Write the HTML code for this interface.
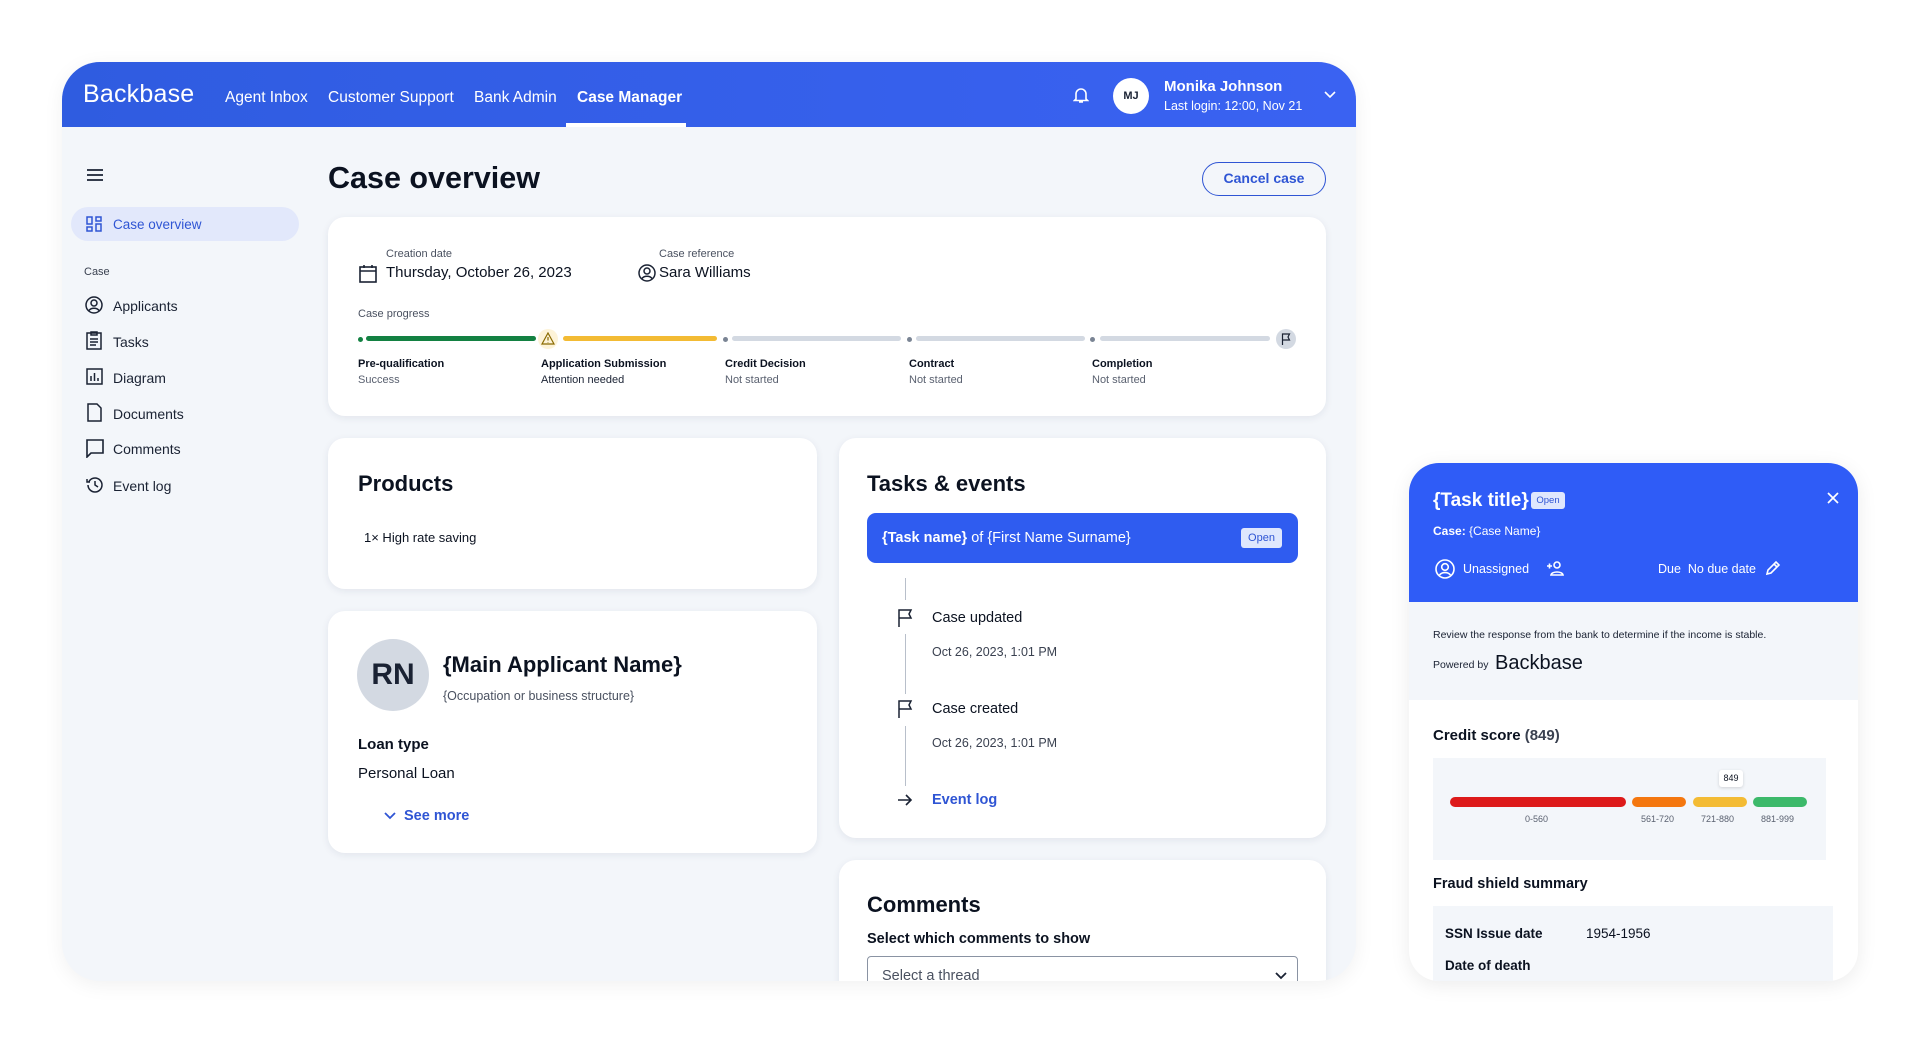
<!DOCTYPE html>
<html><head><meta charset="utf-8"><style>
*{box-sizing:border-box;margin:0;padding:0}
body{width:1920px;height:1045px;background:#fff;font-family:"Liberation Sans",sans-serif;color:#0b1220;position:relative;overflow:hidden}
.abs{position:absolute}
.main{left:62px;top:62px;width:1294px;height:919px;background:#f3f6fa;border-radius:38px 38px 38px 38px;overflow:hidden;box-shadow:0 4px 20px rgba(0,0,0,.06)}
.hdr{left:0;top:0;width:1294px;height:65px;background:linear-gradient(90deg,#2f5ce0,#3a62f2)}
.hdr .t{color:#fff;font-size:15.5px;top:27px}
.card{background:#fff;border-radius:17px;box-shadow:0 2px 8px rgba(20,40,80,.08)}
.nav{font-size:14px;color:#1a2233}
.lbl{font-size:11px;color:#4a5160}
.h2{font-size:22px;font-weight:bold}
.pl{font-size:11px;font-weight:bold}
.ps{font-size:11px;color:#5a6170}
svg{position:absolute}
</style></head><body>
<div class="abs main">
 <div class="abs hdr">
  <div class="abs" style="left:21px;top:18px;color:#fff;font-size:25px;letter-spacing:.2px">Backbase</div>
  <div class="abs t" style="left:163px">Agent Inbox</div>
  <div class="abs t" style="left:266px">Customer Support</div>
  <div class="abs t" style="left:412px">Bank Admin</div>
  <div class="abs t" style="left:515px;font-weight:bold">Case Manager</div>
  <div class="abs" style="left:504px;top:61px;width:120px;height:4px;background:#fff"></div>
  <svg style="left:1011px;top:24px" width="16" height="18" viewBox="0 0 16 18"><path d="M3 13V8a5 5 0 0110 0v5l1.5 1.5h-13z M6 16h4" fill="none" stroke="#fff" stroke-width="1.6"/></svg>
  <div class="abs" style="left:1051px;top:16px;width:36px;height:36px;border-radius:50%;background:#fff;color:#1a2233;font-size:11px;font-weight:bold;text-align:center;line-height:36px">MJ</div>
  <div class="abs" style="left:1102px;top:16px;color:#fff;font-size:15px;font-weight:bold">Monika Johnson</div>
  <div class="abs" style="left:1102px;top:37px;color:#fff;font-size:12.5px">Last login: 12:00, Nov 21</div>
  <svg style="left:1262px;top:29px" width="12" height="8" viewBox="0 0 12 8"><path d="M1 1l5 5 5-5" fill="none" stroke="#fff" stroke-width="1.6"/></svg>
 </div>
 <!-- sidebar -->
 <svg style="left:24px;top:106px" width="18" height="14"><path d="M1 2h16M1 7h16M1 12h16" stroke="#1a2233" stroke-width="1.8"/></svg>
 <div class="abs" style="left:9px;top:145px;width:228px;height:34px;border-radius:17px;background:#e2e8fb"></div>
 <svg style="left:24px;top:154px" width="16" height="16" viewBox="0 0 16 16" fill="none" stroke="#2f55d4" stroke-width="1.5"><rect x="1" y="1" width="5" height="7"/><rect x="10" y="1" width="5" height="4"/><rect x="1" y="11" width="5" height="4"/><rect x="10" y="8" width="5" height="7"/></svg>
 <div class="abs nav" style="left:51px;top:155px;color:#2f55d4;font-size:13.5px">Case overview</div>
 <div class="abs" style="left:22px;top:204px;font-size:11px;color:#3a4150">Case</div>
 <svg style="left:23px;top:234px" width="18" height="18" viewBox="0 0 18 18" fill="none" stroke="#1a2233" stroke-width="1.5"><circle cx="9" cy="9" r="8"/><circle cx="9" cy="7" r="3"/><path d="M4 14.5c2-3 8-3 10 0"/></svg>
 <div class="abs nav" style="left:51px;top:236px">Applicants</div>
 <svg style="left:24px;top:269px" width="16" height="19" viewBox="0 0 16 19" fill="none" stroke="#1a2233" stroke-width="1.5"><rect x="1" y="2" width="14" height="16"/><path d="M5 1h6v3H5z M4 8h8M4 11h8M4 14h6"/></svg>
 <div class="abs nav" style="left:51px;top:272px">Tasks</div>
 <svg style="left:24px;top:306px" width="17" height="17" viewBox="0 0 17 17" fill="none" stroke="#1a2233" stroke-width="1.5"><rect x="1" y="1" width="15" height="15"/><path d="M5 13V8M8.5 13V5M12 13v-3"/></svg>
 <div class="abs nav" style="left:51px;top:308px">Diagram</div>
 <svg style="left:25px;top:341px" width="15" height="19" viewBox="0 0 15 19" fill="none" stroke="#1a2233" stroke-width="1.5"><path d="M1 1h9l4 4v13H1z"/></svg>
 <div class="abs nav" style="left:51px;top:344px">Documents</div>
 <svg style="left:24px;top:377px" width="18" height="19" viewBox="0 0 18 19" fill="none" stroke="#1a2233" stroke-width="1.6"><path d="M1 1h16v13H5l-4 4z"/></svg>
 <div class="abs nav" style="left:51px;top:379px">Comments</div>
 <svg style="left:23px;top:414px" width="19" height="18" viewBox="0 0 19 18" fill="none" stroke="#1a2233" stroke-width="1.5"><path d="M3 9a7 7 0 107-7 7 7 0 00-6 3.5M2 3v3h3M10 5v4l3 2"/></svg>
 <div class="abs nav" style="left:51px;top:416px">Event log</div>
 <!-- title -->
 <div class="abs" style="left:266px;top:99px;font-size:30.5px;font-weight:bold">Case overview</div>
 <div class="abs" style="left:1140px;top:100px;width:124px;height:34px;border:1.5px solid #2f55d4;border-radius:17px;color:#2f55d4;font-size:14px;font-weight:bold;text-align:center;line-height:31px">Cancel case</div>
 <!-- card1 -->
 <div class="abs card" style="left:266px;top:155px;width:998px;height:199px">
  <div class="abs lbl" style="left:58px;top:31px">Creation date</div>
  <svg style="left:31px;top:47px" width="18" height="19" viewBox="0 0 18 19" fill="none" stroke="#1a2233" stroke-width="1.6"><rect x="1" y="3" width="16" height="15"/><path d="M1 7h16M5 1v3M13 1v3"/></svg>
  <div class="abs" style="left:58px;top:47px;font-size:15px">Thursday, October 26, 2023</div>
  <div class="abs lbl" style="left:331px;top:31px">Case reference</div>
  <svg style="left:310px;top:47px" width="18" height="18" viewBox="0 0 18 18" fill="none" stroke="#1a2233" stroke-width="1.5"><circle cx="9" cy="9" r="8"/><circle cx="9" cy="7" r="3"/><path d="M4 14.5c2-3 8-3 10 0"/></svg>
  <div class="abs" style="left:331px;top:47px;font-size:15px">Sara Williams</div>
  <div class="abs lbl" style="left:30px;top:91px">Case progress</div>
  <div class="abs" style="left:30px;top:120px;width:5px;height:5px;border-radius:50%;background:#138142"></div>
  <div class="abs" style="left:38px;top:119px;width:170px;height:5px;border-radius:3px;background:#138142"></div>
  <div class="abs" style="left:210px;top:112px;width:20px;height:20px;border-radius:50%;background:#fdf3d8"></div>
  <svg style="left:213px;top:115px" width="14" height="13" viewBox="0 0 14 13"><path d="M7 1l6 11H1z M7 5v3.5M7 10v.5" fill="none" stroke="#8a6a00" stroke-width="1.2"/></svg>
  <div class="abs" style="left:235px;top:119px;width:154px;height:5px;border-radius:3px;background:#f3bb34"></div>
  <div class="abs" style="left:395px;top:120px;width:5px;height:5px;border-radius:50%;background:#7a8494"></div>
  <div class="abs" style="left:404px;top:119px;width:169px;height:5px;border-radius:3px;background:#d3d9e2"></div>
  <div class="abs" style="left:579px;top:120px;width:5px;height:5px;border-radius:50%;background:#7a8494"></div>
  <div class="abs" style="left:588px;top:119px;width:169px;height:5px;border-radius:3px;background:#d3d9e2"></div>
  <div class="abs" style="left:762px;top:120px;width:5px;height:5px;border-radius:50%;background:#7a8494"></div>
  <div class="abs" style="left:772px;top:119px;width:170px;height:5px;border-radius:3px;background:#d3d9e2"></div>
  <div class="abs" style="left:948px;top:112px;width:20px;height:20px;border-radius:50%;background:#d3d9e2"></div>
  <svg style="left:953px;top:116px" width="10" height="12" viewBox="0 0 10 12"><path d="M1.5 12V1h7l-1.5 3 1.5 3h-7" fill="none" stroke="#1a2233" stroke-width="1.2"/></svg>
  <div class="abs pl" style="left:30px;top:141px">Pre-qualification</div><div class="abs ps" style="left:30px;top:157px">Success</div>
  <div class="abs pl" style="left:213px;top:141px">Application Submission</div><div class="abs ps" style="left:213px;top:157px;color:#1a2233">Attention needed</div>
  <div class="abs pl" style="left:397px;top:141px">Credit Decision</div><div class="abs ps" style="left:397px;top:157px">Not started</div>
  <div class="abs pl" style="left:581px;top:141px">Contract</div><div class="abs ps" style="left:581px;top:157px">Not started</div>
  <div class="abs pl" style="left:764px;top:141px">Completion</div><div class="abs ps" style="left:764px;top:157px">Not started</div>
 </div>
 <!-- products -->
 <div class="abs card" style="left:266px;top:376px;width:489px;height:151px">
  <div class="abs h2" style="left:30px;top:33px">Products</div>
  <div class="abs" style="left:36px;top:92px;font-size:13px">1× High rate saving</div>
 </div>
 <!-- applicant -->
 <div class="abs card" style="left:266px;top:549px;width:489px;height:242px">
  <div class="abs" style="left:29px;top:28px;width:72px;height:72px;border-radius:50%;background:#d3d9e2;font-size:30px;font-weight:bold;text-align:center;line-height:72px;color:#1a2233">RN</div>
  <div class="abs" style="left:115px;top:41px;font-size:22px;font-weight:bold">{Main Applicant Name}</div>
  <div class="abs" style="left:115px;top:78px;font-size:12.5px;color:#4a5160">{Occupation or business structure}</div>
  <div class="abs" style="left:30px;top:125px;font-size:15px;font-weight:bold">Loan type</div>
  <div class="abs" style="left:30px;top:154px;font-size:15px">Personal Loan</div>
  <svg style="left:56px;top:201px" width="12" height="8" viewBox="0 0 12 8"><path d="M1 1l5 5 5-5" fill="none" stroke="#2f55d4" stroke-width="1.8"/></svg>
  <div class="abs" style="left:76px;top:197px;font-size:14.5px;font-weight:bold;color:#2f55d4">See more</div>
 </div>
 <!-- tasks -->
 <div class="abs card" style="left:777px;top:376px;width:487px;height:400px">
  <div class="abs h2" style="left:28px;top:33px">Tasks &amp; events</div>
  <div class="abs" style="left:28px;top:75px;width:431px;height:50px;border-radius:9px;background:#2f5cf0;color:#fff;font-size:14.5px;line-height:51px;padding-left:15px"><b>{Task name}</b> of {First Name Surname}</div>
  <div class="abs" style="left:402px;top:90px;width:41px;height:20px;border-radius:3px;background:#dfe7fd;color:#2f55d4;font-size:11px;text-align:center;line-height:20px">Open</div>
  <div class="abs" style="left:66px;top:140px;width:1px;height:22px;background:#b8bfca"></div>
  <svg style="left:58px;top:171px" width="16" height="18" viewBox="0 0 16 18"><path d="M2 18V1h12l-2 4 2 4H2" fill="none" stroke="#1a2233" stroke-width="1.5"/></svg>
  <div class="abs" style="left:93px;top:172px;font-size:14.5px">Case updated</div>
  <div class="abs" style="left:66px;top:196px;width:1px;height:60px;background:#b8bfca"></div>
  <div class="abs" style="left:93px;top:207px;font-size:12.5px;color:#3a4150">Oct 26, 2023, 1:01 PM</div>
  <svg style="left:58px;top:262px" width="16" height="18" viewBox="0 0 16 18"><path d="M2 18V1h12l-2 4 2 4H2" fill="none" stroke="#1a2233" stroke-width="1.5"/></svg>
  <div class="abs" style="left:93px;top:263px;font-size:14.5px">Case created</div>
  <div class="abs" style="left:66px;top:288px;width:1px;height:60px;background:#b8bfca"></div>
  <div class="abs" style="left:93px;top:298px;font-size:12.5px;color:#3a4150">Oct 26, 2023, 1:01 PM</div>
  <svg style="left:58px;top:354px" width="16" height="16" viewBox="0 0 16 16"><path d="M1 8h13M9 3l5 5-5 5" fill="none" stroke="#1a2233" stroke-width="1.6"/></svg>
  <div class="abs" style="left:93px;top:354px;font-size:14.5px;font-weight:bold;color:#2f55d4">Event log</div>
 </div>
 <!-- comments -->
 <div class="abs card" style="left:777px;top:798px;width:487px;height:160px">
  <div class="abs h2" style="left:28px;top:32px">Comments</div>
  <div class="abs" style="left:28px;top:71px;font-size:14.5px;font-weight:bold">Select which comments to show</div>
  <div class="abs" style="left:28px;top:96px;width:431px;height:36px;border:1px solid #8a93a3;border-radius:4px;font-size:14.5px;color:#4a5160;padding:11px 14px">Select a thread</div>
  <svg style="left:436px;top:112px" width="12" height="8" viewBox="0 0 12 8"><path d="M1 1l5 5 5-5" fill="none" stroke="#1a2233" stroke-width="1.8"/></svg>
 </div>
</div>
<!-- right panel -->
<div class="abs" style="left:1409px;top:463px;width:449px;height:518px;border-radius:30px 30px 30px 30px;overflow:hidden;background:#fff;box-shadow:0 4px 20px rgba(0,0,0,.08)">
 <div class="abs" style="left:0;top:0;width:449px;height:139px;background:#2f5cf7"></div>
 <div class="abs" style="left:24px;top:27px;color:#fff;font-size:19px;font-weight:bold">{Task title}</div>
 <div class="abs" style="left:122px;top:29px;width:34px;height:17px;border-radius:3px;background:#dfe7fd;color:#2f55d4;font-size:9.5px;text-align:center;line-height:17px">Open</div>
 <svg style="left:418px;top:29px" width="12" height="12"><path d="M1 1l10 10M11 1L1 11" stroke="#fff" stroke-width="1.7"/></svg>
 <div class="abs" style="left:24px;top:61px;color:#fff;font-size:12px"><b>Case:</b> {Case Name}</div>
 <svg style="left:26px;top:96px" width="20" height="20" viewBox="0 0 20 20" fill="none" stroke="#fff" stroke-width="1.6"><circle cx="10" cy="10" r="9"/><circle cx="10" cy="8" r="3.3"/><path d="M4.5 16c2.5-3.3 8.5-3.3 11 0"/></svg>
 <div class="abs" style="left:54px;top:99px;color:#fff;font-size:12.5px">Unassigned</div>
 <svg style="left:137px;top:98px" width="18" height="15" viewBox="0 0 18 15" fill="none" stroke="#fff" stroke-width="1.6"><circle cx="11" cy="4" r="3"/><path d="M5 14c1-4 11-4 12 0z M1 5h5M3.5 2.5v5"/></svg>
 <div class="abs" style="left:249px;top:99px;color:#fff;font-size:12.5px">Due&nbsp; No due date</div>
 <svg style="left:356px;top:97px" width="16" height="16" viewBox="0 0 16 16" fill="none" stroke="#fff" stroke-width="1.6"><path d="M2 14l1-4 8-8 3 3-8 8z M9 4l3 3"/></svg>
 <div class="abs" style="left:0;top:139px;width:449px;height:98px;background:#f3f6fa"></div>
 <div class="abs" style="left:24px;top:166px;font-size:10.5px;color:#1a2233">Review the response from the bank to determine if the income is stable.</div>
 <div class="abs" style="left:24px;top:196px;font-size:10.5px;color:#1a2233">Powered by</div>
 <div class="abs" style="left:86px;top:189px;font-size:20px;color:#0b1220">Backbase</div>
 <div class="abs" style="left:24px;top:264px;font-size:15px;font-weight:bold">Credit score <span style="color:#3a4150">(849)</span></div>
 <div class="abs" style="left:24px;top:295px;width:393px;height:102px;background:#f3f6fa"></div>
 <div class="abs" style="left:310px;top:307px;width:24px;height:17px;background:#fff;border-radius:3px;font-size:9px;text-align:center;line-height:17px;box-shadow:0 1px 3px rgba(0,0,0,.15)">849</div>
 <div class="abs" style="left:41px;top:334px;width:176px;height:10px;border-radius:5px;background:#dd1a1a"></div>
 <div class="abs" style="left:223px;top:334px;width:54px;height:10px;border-radius:5px;background:#f4770f"></div>
 <div class="abs" style="left:284px;top:334px;width:54px;height:10px;border-radius:5px;background:#f3bb34"></div>
 <div class="abs" style="left:344px;top:334px;width:54px;height:10px;border-radius:5px;background:#3cb96a"></div>
 <div class="abs" style="left:116px;top:351px;font-size:9px;color:#5a6170">0-560</div>
 <div class="abs" style="left:232px;top:351px;font-size:9px;color:#5a6170">561-720</div>
 <div class="abs" style="left:292px;top:351px;font-size:9px;color:#5a6170">721-880</div>
 <div class="abs" style="left:352px;top:351px;font-size:9px;color:#5a6170">881-999</div>
 <div class="abs" style="left:24px;top:413px;font-size:14.5px;font-weight:bold">Fraud shield summary</div>
 <div class="abs" style="left:24px;top:443px;width:400px;height:80px;background:#f3f6fa"></div>
 <div class="abs" style="left:36px;top:463px;font-size:13.5px;font-weight:bold">SSN Issue date</div>
 <div class="abs" style="left:177px;top:463px;font-size:13.5px">1954-1956</div>
 <div class="abs" style="left:36px;top:495px;font-size:13.5px;font-weight:bold">Date of death</div>
</div>
</body></html>
